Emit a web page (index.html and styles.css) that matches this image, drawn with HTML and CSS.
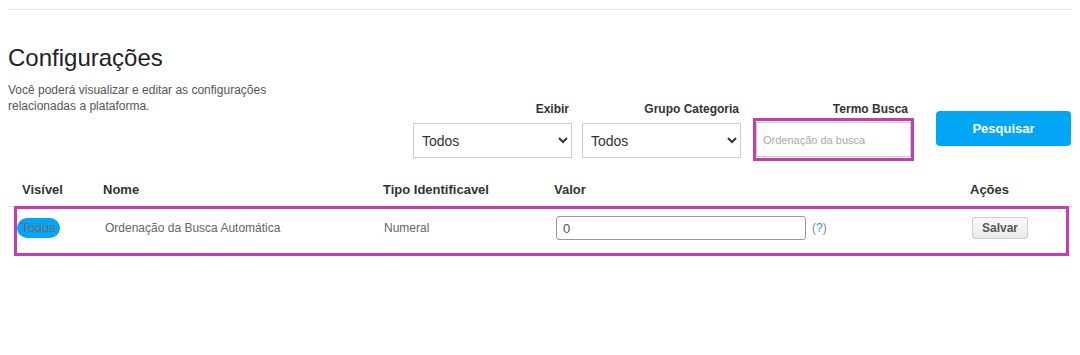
FILE: index.html
```html
<!DOCTYPE html>
<html lang="pt-BR">
<head>
    <meta charset="UTF-8">
    <meta name="viewport" content="width=device-width, initial-scale=1.0">
    <title>Configurações</title>
    <link rel="stylesheet" href="styles.css">
</head>
<body>

    <hr class="top-rule">

    <div class="page-head">
        <div class="intro">
            <h1>Configurações</h1>
            <p>Você poderá visualizar e editar as configurações relacionadas a plataforma.</p>
        </div>

        <div class="filters">
            <div class="filter filter-show">
                <label for="exibir">Exibir</label>
                <select id="exibir">
                    <option>Todos</option>
                </select>
            </div>
            <div class="filter filter-group">
                <label for="grupo">Grupo Categoria</label>
                <select id="grupo">
                    <option>Todos</option>
                </select>
            </div>
            <div class="filter filter-term">
                <label for="termo">Termo Busca</label>
                <div class="highlight">
                    <input type="text" id="termo" placeholder="Ordenação da busca">
                </div>
            </div>
            <button class="search-btn">Pesquisar</button>
        </div>
    </div>

    <div class="config-table">
        <div class="table-head">
            <span>Visível</span>
            <span>Nome</span>
            <span>Tipo Identificavel</span>
            <span>Valor</span>
            <span>Ações</span>
        </div>
        <div class="table-body">
            <div class="table-row">
                <span><span class="pill">Todos</span></span>
                <span>Ordenação da Busca Automática</span>
                <span>Numeral</span>
                <span class="value-cell">
                    <input type="text" class="value-input" value="0">
                    <span class="help">(<a href="#">?</a>)</span>
                </span>
                <span><button class="save-btn">Salvar</button></span>
            </div>
        </div>
    </div>

</body>
</html>
```

FILE: styles.css
```css
body {
    margin: 0;
    padding: 0 8px;
    font-family: "Liberation Sans", Arial, sans-serif;
    color: #333;
    background: #fff;
}
.top-rule {
    margin: 9px 0 0 0;
    border: none;
    border-top: 1px solid #e6e6e6;
}

/* header area */
.page-head {
    display: flex;
    align-items: flex-start;
}
.intro {
    width: 300px;
    padding-top: 34px;
}
.intro h1 {
    margin: 0;
    font-size: 24px;
    line-height: 28px;
    font-weight: normal;
    color: #222;
}
.intro p {
    margin: 10px 0 0 0;
    font-size: 12px;
    line-height: 16px;
    color: #555;
}
.filters {
    margin-left: auto;
    margin-top: 91px;
    display: flex;
    align-items: flex-start;
}
.filter {
    display: flex;
    flex-direction: column;
    width: 159px;
    margin-right: 10px;
}
.filter label {
    font-size: 12px;
    line-height: 16px;
    font-weight: bold;
    color: #333;
    text-align: right;
    padding-right: 5px;
    margin-bottom: 6px;
}
.filter-show label {
    padding-right: 3px;
}
.filter-group label {
    padding-right: 2px;
}
.filter select {
    height: 35px;
    border: 1px solid #ccc;
    background: #fff;
    font-family: inherit;
    font-size: 14px;
    color: #333;
    padding-left: 4px;
}
.filter-term {
    width: 161px;
    margin-left: 2px;
    margin-right: 22px;
}
.filter-term label {
    padding-right: 6px;
    margin-bottom: 1px;
}
.highlight {
    border: 3px solid #c040b2;
    padding: 1px 0;
}
.highlight input {
    box-sizing: border-box;
    width: 100%;
    height: 35px;
    border: 1px solid #ccc;
    padding: 0 6px;
    font-family: inherit;
    font-size: 11px;
    color: #333;
    outline: none;
}
.highlight input::placeholder {
    color: #aaa;
}
.search-btn {
    margin-top: 10px;
    margin-right: 1px;
    width: 135px;
    height: 35px;
    border: none;
    border-radius: 4px;
    background: #03a6f5;
    color: #fff;
    font-family: inherit;
    font-size: 13px;
    font-weight: bold;
    cursor: pointer;
}

/* table */
.config-table {
    margin-top: 14px;
}
.table-head {
    display: grid;
    grid-template-columns: 81px 280px 171px 416px 1fr;
    padding-left: 14px;
    height: 31px;
    line-height: 30px;
    font-size: 13px;
    font-weight: bold;
    color: #333;
}
.table-body {
    border-top: 1px solid #e3e3e3;
}
.table-row {
    display: grid;
    grid-template-columns: 88px 279px 172px 416px 1fr;
    align-items: center;
    margin: -1px 3px 0 6px;
    border: 3px solid #c040b2;
    padding: 6px 0 12px 0;
    font-size: 12px;
    color: #666;
}
.table-row > span {
    height: 26px;
    display: flex;
    align-items: center;
}
.pill {
    display: inline-block;
    width: 43px;
    height: 20px;
    line-height: 20px;
    border-radius: 10px;
    background: #03a6f5;
    color: #6a6a6a;
    font-size: 13px;
    text-align: center;
}
.value-input {
    box-sizing: border-box;
    width: 250px;
    height: 24px;
    border: 1px solid #999;
    border-radius: 3px;
    padding: 0 6px;
    font-family: inherit;
    font-size: 13px;
    color: #555;
}
.help {
    margin-left: 6px;
    color: #888;
    font-size: 12px;
}
.help a {
    color: #1a9be6;
    text-decoration: none;
}
.save-btn {
    width: 56px;
    height: 22px;
    border: 1px solid #ccc;
    border-radius: 3px;
    background: linear-gradient(#fbfbfb, #e9e9e9);
    color: #555;
    font-family: inherit;
    font-size: 12px;
    font-weight: bold;
    cursor: pointer;
}
```
